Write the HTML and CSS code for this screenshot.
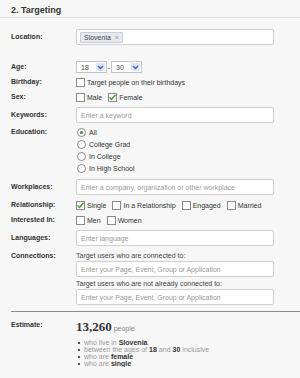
FILE: index.html
```html
<!DOCTYPE html>
<html lang="en">
<head>
    <meta charset="UTF-8">
    <meta name="viewport" content="width=device-width, initial-scale=1.0">
    <title>Targeting</title>
    <link rel="stylesheet" href="styles.css">
</head>
<body>
    <h2 class="title">2. Targeting</h2>

    <div class="form">
        <div class="row row-location">
            <div class="label">Location:</div>
            <div class="input">
                <span class="token">Slovenia <span class="token-x">&times;</span></span>
            </div>
        </div>

        <div class="row row-age">
            <div class="label">Age:</div>
            <span class="select">18<span class="arrow"><svg width="7" height="5" viewBox="0 0 7 5"><path d="M1 1l2.5 2.5L6 1" fill="none" stroke="#3b63b0" stroke-width="1.4"/></svg></span></span>
            <span class="dash">-</span>
            <span class="select">30<span class="arrow"><svg width="7" height="5" viewBox="0 0 7 5"><path d="M1 1l2.5 2.5L6 1" fill="none" stroke="#3b63b0" stroke-width="1.4"/></svg></span></span>
        </div>

        <div class="row row-check row-tight">
            <div class="label">Birthday:</div>
            <span class="option"><span class="cb"></span>Target people on their birthdays</span>
        </div>

        <div class="row row-check">
            <div class="label">Sex:</div>
            <span class="option"><span class="cb"></span>Male</span>
            <span class="option"><span class="cb checked"><svg width="9" height="9" viewBox="0 0 9 9"><path d="M1.5 4.5l2 2L7.5 1.8" fill="none" stroke="#3e9a2e" stroke-width="1.4"/></svg></span>Female</span>
        </div>

        <div class="row">
            <div class="label">Keywords:</div>
            <div class="input">Enter a keyword</div>
        </div>

        <div class="row row-top row-edu">
            <div class="label label-radio">Education:</div>
            <div class="radios">
                <span class="radio-line"><span class="radio on"></span>All</span>
                <span class="radio-line"><span class="radio"></span>College Grad</span>
                <span class="radio-line"><span class="radio"></span>In College</span>
                <span class="radio-line"><span class="radio"></span>In High School</span>
            </div>
        </div>

        <div class="row">
            <div class="label">Workplaces:</div>
            <div class="input">Enter a company, organization or other workplace</div>
        </div>

        <div class="row row-check">
            <div class="label">Relationship:</div>
            <span class="option"><span class="cb checked"><svg width="9" height="9" viewBox="0 0 9 9"><path d="M1.5 4.5l2 2L7.5 1.8" fill="none" stroke="#3e9a2e" stroke-width="1.4"/></svg></span>Single</span>
            <span class="option"><span class="cb"></span>In a Relationship</span>
            <span class="option"><span class="cb"></span>Engaged</span>
            <span class="option"><span class="cb"></span>Married</span>
        </div>

        <div class="row row-check">
            <div class="label">Interested In:</div>
            <span class="option"><span class="cb"></span>Men</span>
            <span class="option"><span class="cb"></span>Women</span>
        </div>

        <div class="row">
            <div class="label">Languages:</div>
            <div class="input">Enter language</div>
        </div>

        <div class="row row-top">
            <div class="label">Connections:</div>
            <div class="connections">
                <div class="hint">Target users who are connected to:</div>
                <div class="input">Enter your Page, Event, Group or Application</div>
                <div class="hint hint-second">Target users who are not already connected to:</div>
                <div class="input">Enter your Page, Event, Group or Application</div>
            </div>
        </div>
    </div>

    <div class="estimate">
        <div class="label">Estimate:</div>
        <div class="estimate-body">
            <div class="count"><span class="number">13,260</span> people</div>
            <ul class="facts">
                <li>who live in <b>Slovenia</b></li>
                <li>between the ages of <b>18</b> and <b>30</b> inclusive</li>
                <li>who are <b>female</b></li>
                <li>who are <b>single</b></li>
            </ul>
        </div>
    </div>
</body>
</html>
```

FILE: styles.css
```css
body {
    margin: 0;
    background: #f7f7f7;
    font-family: "Liberation Sans", Arial, sans-serif;
    font-size: 7px;
    color: #333;
    overflow: hidden;
}
.title {
    margin: 0;
    height: 18px;
    box-sizing: border-box;
    padding: 5px 0 0 11px;
    font-size: 9px;
    line-height: 10px;
    font-weight: bold;
    color: #333;
    border-bottom: 1px solid #dedede;
}
.form {
    padding: 0 26px 0 11px;
}
.row {
    display: flex;
    align-items: center;
    margin-top: 5px;
}
.row-top {
    align-items: flex-start;
}
.row-location {
    margin-top: 11px;
}
.row-age {
    margin-top: 16px;
}
.row-tight {
    margin-top: 4px;
}
.row-edu {
    margin-top: 3px;
}
.row-check {
    height: 10px;
}
.label {
    width: 65px;
    flex-shrink: 0;
    font-weight: bold;
    line-height: 10px;
    color: #333;
}
.label-radio {
    line-height: 12px;
}
.input {
    flex: 1;
    height: 16px;
    box-sizing: border-box;
    border: 1px solid #cfcfcf;
    border-radius: 2px;
    background: #fff;
    padding: 0 4px;
    display: flex;
    align-items: center;
    color: #999;
    white-space: nowrap;
    overflow: hidden;
}
.token {
    height: 9px;
    line-height: 9px;
    padding: 0 3px;
    margin-left: -1px;
    background: #e6e9f0;
    border: 1px solid #c8cedb;
    border-radius: 1px;
    color: #444;
}
.token-x {
    color: #999;
    margin-left: 2px;
}
.select {
    width: 31px;
    height: 12px;
    box-sizing: border-box;
    border: 1px solid #c4c4c4;
    background: #fff;
    display: flex;
    align-items: center;
    justify-content: space-between;
    padding: 0 1px 0 4px;
    color: #444;
}
.arrow {
    width: 9px;
    height: 8px;
    background: #dce5f5;
    border-radius: 1px;
    display: flex;
    align-items: center;
    justify-content: center;
}
.dash {
    width: 4px;
    text-align: center;
    color: #555;
}
.option {
    display: flex;
    align-items: center;
    margin-right: 6px;
    white-space: nowrap;
}
.cb {
    width: 9px;
    height: 9px;
    box-sizing: border-box;
    border: 1px solid #8a8a8a;
    background: #fff;
    margin-right: 2px;
    display: flex;
    align-items: center;
    justify-content: center;
}
.cb svg {
    margin: -1px;
}
.radios {
    display: flex;
    flex-direction: column;
    padding-left: 1px;
}
.radio-line {
    display: flex;
    align-items: center;
    height: 12px;
}
.radio {
    width: 9px;
    height: 9px;
    box-sizing: border-box;
    border: 1px solid #8a8a8a;
    border-radius: 50%;
    background: #fff;
    margin-right: 3px;
    display: flex;
    align-items: center;
    justify-content: center;
}
.radio.on::after {
    content: "";
    width: 3px;
    height: 3px;
    border-radius: 50%;
    background: #4a7a3a;
}
.connections {
    flex: 1;
    display: flex;
    flex-direction: column;
}
.connections .input {
    flex: none;
}
.hint {
    height: 10px;
    line-height: 10px;
    color: #444;
}
.hint-second {
    margin-top: 2px;
}
.estimate {
    display: flex;
    margin: 6px 0 0 11px;
    padding-top: 8px;
    border-top: 1px solid #8c8c8c;
}
.estimate-body {
    display: flex;
    flex-direction: column;
}
.count {
    line-height: 14px;
    color: #888;
}
.number {
    font-family: "Liberation Serif", "Times New Roman", serif;
    font-size: 13px;
    font-weight: bold;
    color: #333;
}
.facts {
    list-style: none;
    margin: 3px 0 0;
    padding: 0;
}
.facts li {
    line-height: 7px;
    color: #999;
    display: flex;
    align-items: center;
    white-space: nowrap;
}
.facts li::before {
    content: "";
    width: 2px;
    height: 2px;
    background: #555;
    margin: 0 4px 0 2px;
}
.facts b {
    color: #333;
    margin: 0 2px;
}
```
